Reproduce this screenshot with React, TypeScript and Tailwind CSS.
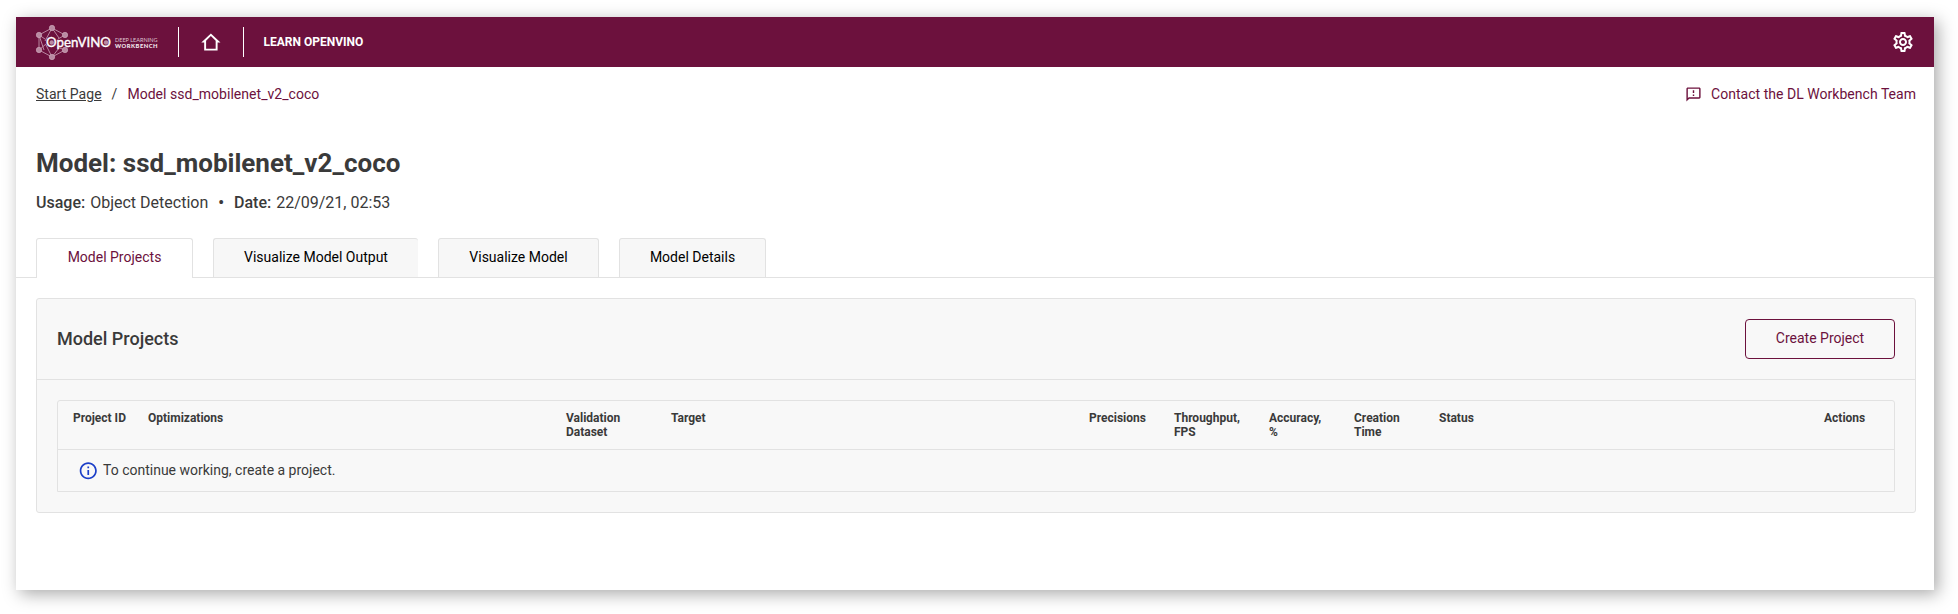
import React from "react";
import { MdOutlineSettings, MdOutlineFeedback, MdInfoOutline } from "react-icons/md";

const nodes: [number, number][] = [
  [17, 5],
  [30, 12],
  [30, 27],
  [17, 34],
  [4, 27],
  [4, 12],
];

function Logo() {
  return (
    <svg width="124" height="38" viewBox="0 0 124 38" className="block" aria-label="OpenVINO Deep Learning Workbench">
      <g stroke="#c193aa" strokeWidth="0.9" fill="none">
        <path d="M17 5L30 12M30 27L17 34L4 27V12L17 5M17 5L10 18M17 5L24 15M4 12L10 16M4 12L9 27M4 27L11 21M17 34L11 22M17 34L24 25M30 27L22 24M30 12L23 16" />
      </g>
      {nodes.map(([x, y]) => (
        <circle key={`${x}-${y}`} cx={x} cy={y} r="2.7" fill="#b98aa2" stroke="#d0adbf" strokeWidth="0.6" />
      ))}
      <circle cx="16.7" cy="19.5" r="2.2" fill="#b98aa2" />
      <circle cx="71" cy="19.5" r="2.2" fill="#b98aa2" />
      <text x="11" y="24.4" fontSize="14" fontFamily="Lato, sans-serif" fontWeight="400" fill="#fff" stroke="#fff" strokeWidth="0.4" textLength="65" lengthAdjust="spacingAndGlyphs">
        OpenVINO
      </text>
      <text x="80" y="18.6" fontSize="5.8" fontFamily="Lato, sans-serif" fill="#dcc3d0" textLength="42.5" lengthAdjust="spacingAndGlyphs">
        DEEP LEARNING
      </text>
      <text x="80" y="24.5" fontSize="5.8" fontFamily="Lato, sans-serif" fontWeight="900" fill="#f3eaef" textLength="42.5" lengthAdjust="spacing">
        WORKBENCH
      </text>
    </svg>
  );
}

function HomeIcon() {
  return (
    <svg width="23" height="23" viewBox="0 0 24 24" fill="#fff">
      <path fillRule="evenodd" d="M12.4 2.6L2.4 12h3v8.4h14V12h3l-10-9.4zm0 2.7l5 4.9v8.2h-10v-8.2l5-4.9z" />
    </svg>
  );
}

const columns: { label: string; second?: string; width: string }[] = [
  { label: "Project ID", width: "w-[75px]" },
  { label: "Optimizations", width: "w-[418px]" },
  { label: "Validation", second: "Dataset", width: "w-[105px]" },
  { label: "Target", width: "w-[418px]" },
  { label: "Precisions", width: "w-[85px]" },
  { label: "Throughput,", second: "FPS", width: "w-[95px]" },
  { label: "Accuracy,", second: "%", width: "w-[85px]" },
  { label: "Creation", second: "Time", width: "w-[85px]" },
  { label: "Status", width: "w-[385px]" },
  { label: "Actions", width: "w-[60px]" },
];

const tabs = [
  { label: "Model Projects", box: "w-[157px] border-x bg-white text-[#6c113d]", active: true },
  { label: "Visualize Model Output", box: "w-[205px] border-l bg-[#f7f7f7] text-black" },
  { label: "Visualize Model", box: "w-[161px] border-x bg-[#f7f7f7] text-black" },
  { label: "Model Details", box: "w-[147px] border-x bg-[#f7f7f7] text-black" },
];

export default function App() {
  return (
    <div className="h-[614px] w-[1958px] overflow-hidden bg-white pt-[17px] pl-4 font-['Roboto',sans-serif] text-[#3a3a3a]">
      <div className="h-[573px] w-[1918px] bg-white shadow-[4px_4px_16px_rgba(0,0,0,0.34)]">
        <header className="flex h-[50px] items-center bg-[#6c113d] text-white">
          <div className="ml-[19px] w-[139px]">
            <Logo />
          </div>
          <div className="ml-[4px] h-[30px] w-px bg-white" />
          <div className="ml-[20px]">
            <HomeIcon />
          </div>
          <div className="ml-[21px] h-[30px] w-px bg-white" />
          <span className="ml-[19.5px] text-[12px] font-bold whitespace-nowrap">LEARN OPENVINO</span>
          <MdOutlineSettings className="mr-[19px] ml-auto size-6" />
        </header>

        <nav className="flex h-[54px] items-center pr-[18px] pl-5 text-[14px] tracking-[0.03px] whitespace-nowrap">
          <a className="underline underline-offset-1">Start Page</a>
          <span className="mx-[10px]">/</span>
          <span className="text-[#6c113d]">Model ssd_mobilenet_v2_coco</span>
          <span className="ml-auto flex items-center gap-[9px] text-[#6c113d]">
            <MdOutlineFeedback className="size-[17px]" />
            Contact the DL Workbench Team
          </span>
        </nav>

        <h1 className="mt-[26px] pl-5 text-[26px] leading-8 font-bold whitespace-nowrap">Model: ssd_mobilenet_v2_coco</h1>
        <div className="mt-[12px] flex pl-5 text-[16px] leading-6 whitespace-nowrap">
          <b className="mr-[5px] font-medium">Usage:</b>
          <span>Object Detection</span>
          <b className="mx-[10px]">•</b>
          <b className="mr-[5px] font-medium">Date:</b>
          <span>22/09/21, 02:53</span>
        </div>

        <div className="mt-[23px] flex h-10 gap-5 border-b border-[#e2e2e2] pl-5 text-[14px]">
          {tabs.map((t) => (
            <div
              key={t.label}
              className={`${t.box} flex items-center justify-center rounded-t-[3px] border-t border-[#e2e2e2] whitespace-nowrap ${t.active ? "-mb-px h-10 pb-[2px]" : "h-[39px] pb-px"}`}
            >
              {t.label}
            </div>
          ))}
        </div>

        <section className="mt-5 ml-5 h-[215px] w-[1880px] rounded-[3px] border border-[#e2e2e2] bg-[#f8f8f8]">
          <div className="flex h-[81px] items-center justify-between border-b border-[#e2e2e2] px-5">
            <h2 className="pb-[2px] text-[18px] font-medium">Model Projects</h2>
            <button className="h-10 w-[150px] rounded border border-[#6c113d] pb-px text-[14px] text-[#6c113d]">Create Project</button>
          </div>
          <div className="mx-5 mt-5 h-[92px] rounded-t-[3px] border border-[#e2e2e2]">
            <div className="flex h-[49px] border-b border-[#e2e2e2] pt-[10px] pl-[15px] text-[12px] leading-[14px] font-bold whitespace-nowrap">
              {columns.map((c) => (
                <div key={c.label} className={`${c.width} shrink-0`}>
                  <div>{c.label}</div>
                  {c.second && <div>{c.second}</div>}
                </div>
              ))}
            </div>
            <div className="flex h-[41px] items-center pl-5 text-[14px]">
              <MdInfoOutline className="size-[20.5px] translate-y-[0.5px] text-[#1c3fc8]" />
              <span className="ml-[4.5px]">To continue working, create a project.</span>
            </div>
          </div>
        </section>
      </div>
    </div>
  );
}
